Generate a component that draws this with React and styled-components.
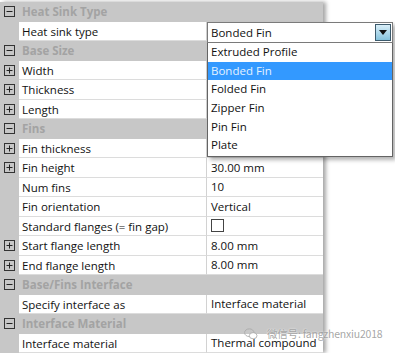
import styled, { createGlobalStyle } from "styled-components";

const GlobalStyle = createGlobalStyle`
  body {
    margin: 0;
    background: #ffffff;
    font-family: "Open Sans", "Noto Sans", sans-serif;
  }
`;

const Page = styled.div`
  position: relative;
  width: 395px;
  height: 353px;
  overflow: hidden;
  padding-top: 2px;
  box-sizing: border-box;
`;

const Grid = styled.div`
  width: 323px;
  background: #c7c7c7;
  box-shadow: 3px 0 4px rgba(0, 0, 0, 0.35);
`;

const Row = styled.div`
  display: grid;
  grid-template-columns: 19px 188px 116px;
  height: 19.5px;
  font-size: 11.5px;
  line-height: 19.5px;
  color: #111;
`;

const Gutter = styled.div`
  display: flex;
  align-items: center;
  justify-content: center;
  background: #c7c7c7;
`;

const HeaderLabel = styled.div`
  grid-column: 2 / 4;
  padding-left: 3px;
  font-weight: 700;
  color: #a3a3a3;
  background: #c7c7c7;
`;

const NameCell = styled.div`
  padding-left: 3px;
  background: #fff;
  border-bottom: 1px solid #dcdcdc;
  border-right: 1px solid #d2d2d2;
  box-sizing: border-box;
  white-space: nowrap;
  overflow: hidden;
`;

const ValueCell = styled.div`
  padding-left: 4px;
  background: #fff;
  border-bottom: 1px solid #dcdcdc;
  box-sizing: border-box;
  white-space: nowrap;
  overflow: hidden;
  display: flex;
  align-items: center;
`;

const Check = styled.span`
  width: 11px;
  height: 11px;
  border: 1px solid #444;
  background: #fff;
`;

const Combo = styled.div`
  position: absolute;
  left: 207px;
  top: 22px;
  width: 186px;
  font-size: 11.5px;
  color: #111;
  box-shadow: 3px 3px 4px rgba(0, 0, 0, 0.3);
`;

const ComboBox = styled.div`
  height: 21px;
  box-sizing: border-box;
  border: 1px solid #7a7a7a;
  background: #fff;
  display: flex;
  align-items: center;
  justify-content: space-between;
  padding-left: 3px;
  padding-right: 1px;
`;

const ArrowButton = styled.div`
  width: 16px;
  height: 17px;
  box-sizing: border-box;
  border: 1px solid #3c5a6c;
  background: linear-gradient(#d9eef8, #86c3dd);
  display: flex;
  align-items: center;
  justify-content: center;
`;

const List = styled.div`
  border: 1px solid #646464;
  border-top: none;
  background: #fff;
  padding-bottom: 1px;
`;

const Item = styled.div`
  height: 18.7px;
  line-height: 18.7px;
  padding-left: 3px;
  background: ${(p) => (p.selected ? "#3399ff" : "#fff")};
  color: ${(p) => (p.selected ? "#e4f2ff" : "#111")};
`;

const Watermark = styled.div`
  position: absolute;
  left: 244px;
  top: 326px;
  display: flex;
  align-items: center;
  gap: 9px;
  white-space: nowrap;
  font-size: 10.5px;
  letter-spacing: -0.2px;
  color: rgba(150, 150, 150, 0.85);
  font-family: "Noto Sans CJK SC", "Noto Sans", sans-serif;
  text-shadow: 0 0 2px #fff;
`;

const Expander = ({ open }) => (
  <svg width="11" height="11" viewBox="0 0 11 11">
    <rect x="0.5" y="0.5" width="10" height="10" fill="none" stroke="#333" />
    <line x1="2.5" y1="5.5" x2="8.5" y2="5.5" stroke="#222" />
    {!open && <line x1="5.5" y1="2.5" x2="5.5" y2="8.5" stroke="#222" />}
  </svg>
);

const rows = [
  { header: "Heat Sink Type" },
  { name: "Heat sink type", value: "" },
  { header: "Base Size" },
  { name: "Width", value: "", exp: true },
  { name: "Thickness", value: "", exp: true },
  { name: "Length", value: "", exp: true },
  { header: "Fins" },
  { name: "Fin thickness", value: "", exp: true },
  { name: "Fin height", value: "30.00 mm", exp: true },
  { name: "Num fins", value: "10" },
  { name: "Fin orientation", value: "Vertical" },
  { name: "Standard flanges (= fin gap)", check: true },
  { name: "Start flange length", value: "8.00 mm", exp: true },
  { name: "End flange length", value: "8.00 mm", exp: true },
  { header: "Base/Fins Interface" },
  { name: "Specify interface as", value: "Interface material" },
  { header: "Interface Material" },
  { name: "Interface material", value: "Thermal compound" },
];

const options = ["Extruded Profile", "Bonded Fin", "Folded Fin", "Zipper Fin", "Pin Fin", "Plate"];

export default function App() {
  return (
    <Page>
      <GlobalStyle />
      <Grid>
        {rows.map((r, i) =>
          r.header ? (
            <Row key={i}>
              <Gutter>
                <Expander open />
              </Gutter>
              <HeaderLabel>{r.header}</HeaderLabel>
            </Row>
          ) : (
            <Row key={i}>
              <Gutter>{r.exp && <Expander />}</Gutter>
              <NameCell>{r.name}</NameCell>
              <ValueCell>{r.check ? <Check /> : r.value}</ValueCell>
            </Row>
          )
        )}
      </Grid>

      <Combo>
        <ComboBox>
          Bonded Fin
          <ArrowButton>
            <svg width="8" height="5" viewBox="0 0 8 5">
              <path d="M0 0 H8 L4 5 Z" fill="#111" />
            </svg>
          </ArrowButton>
        </ComboBox>
        <List>
          {options.map((o) => (
            <Item key={o} selected={o === "Bonded Fin"}>
              {o}
            </Item>
          ))}
        </List>
      </Combo>

      <Watermark>
        <svg width="14" height="12" viewBox="0 0 16 14">
          <ellipse cx="6" cy="5.5" rx="5.5" ry="4.5" fill="none" stroke="#aaa" />
          <ellipse cx="10.5" cy="9" rx="4.5" ry="3.6" fill="#fff" stroke="#aaa" />
        </svg>
        <span>微信号: fangzhenxiu2018</span>
      </Watermark>
    </Page>
  );
}
